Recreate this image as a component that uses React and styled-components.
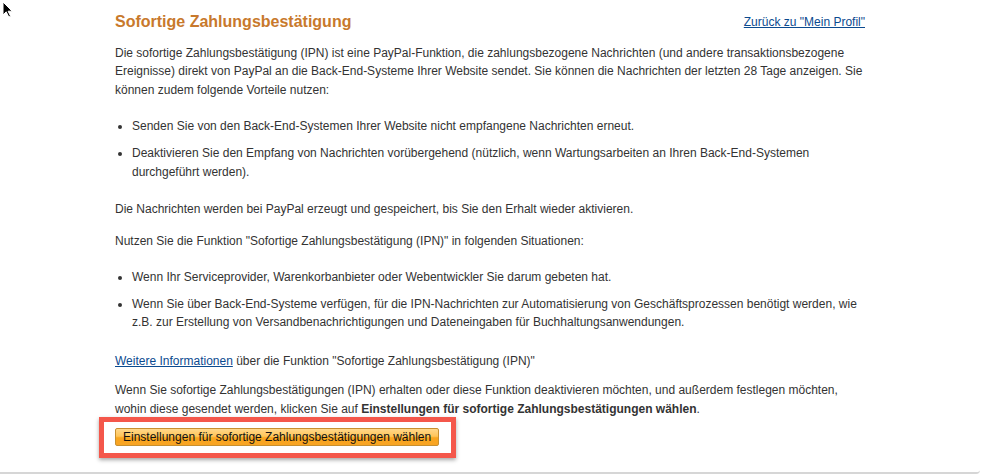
import styled, { createGlobalStyle } from 'styled-components';

const GlobalStyle = createGlobalStyle`
  html, body {
    margin: 0;
    padding: 0;
    background: #fff;
  }
  body {
    font-family: Arial, "Liberation Sans", Helvetica, sans-serif;
    color: #333;
  }
`;

const Page = styled.div`
  position: relative;
  box-sizing: border-box;
  width: 980px;
  height: 474px;
  border-bottom: 2px solid #d6d6d6;
  border-bottom-right-radius: 4px;
  padding: 11px 0 0 115px;
`;

const Cursor = styled.svg`
  position: absolute;
  left: 2px;
  top: 1px;
`;

const Content = styled.div`
  width: 750px;
  font-size: 12px;
  line-height: 18.5px;
`;

const Header = styled.div`
  display: flex;
  justify-content: space-between;
  align-items: center;
  margin-bottom: 10.5px;
`;

const Title = styled.h1`
  margin: 0;
  font-size: 16px;
  line-height: 22px;
  font-weight: bold;
  color: #c8792c;
`;

const Link = styled.a`
  color: #0b4a8f;
  text-decoration: underline;
  cursor: pointer;
`;

const Paragraph = styled.p`
  margin: 0 0 ${p => p.$gap || 0}px;
`;

const List = styled.ul`
  margin: 0 0 ${p => p.$gap || 0}px;
  padding-left: 17px;
  display: flex;
  flex-direction: column;
  gap: 8.5px;
`;

const Item = styled.li`
  padding-left: 0;
`;

const Highlight = styled.div`
  position: relative;
  display: inline-block;
  margin-top: 10px;
`;

const Outline = styled.span`
  position: absolute;
  top: -11px;
  left: -16px;
  right: -17px;
  bottom: -12px;
  border: 5px solid #f4574b;
  box-shadow: 0 2px 4px rgba(0, 0, 0, 0.35);
  pointer-events: none;
`;

const Button = styled.button`
  display: block;
  box-sizing: border-box;
  height: 18px;
  padding: 0 7px;
  border: 1px solid #c8902f;
  border-radius: 2px;
  background: linear-gradient(to bottom, #ffd88a 0%, #ffc65a 45%, #f9a61e 55%, #f8a424 100%);
  font-family: Arial, "Liberation Sans", Helvetica, sans-serif;
  font-size: 12px;
  line-height: 16px;
  color: #111;
  cursor: pointer;
`;

export default function App() {
  return (
    <>
      <GlobalStyle />
      <Page>
        <Cursor width="11" height="17" viewBox="0 0 11 17">
          <path d="M1 1 L1 14 L4.2 10.8 L6.8 16 L8.6 15.2 L6.1 10.2 L10.2 10.2 Z" fill="#000" stroke="#fff" strokeWidth="1" />
        </Cursor>
        <Content>
          <Header>
            <Title>Sofortige Zahlungsbestätigung</Title>
            <Link>Zurück zu "Mein Profil"</Link>
          </Header>
          <Paragraph $gap={18}>
            Die sofortige Zahlungsbestätigung (IPN) ist eine PayPal-Funktion, die zahlungsbezogene Nachrichten (und andere transaktionsbezogene Ereignisse) direkt von PayPal an die Back-End-Systeme Ihrer Website sendet. Sie können die Nachrichten der letzten 28 Tage anzeigen. Sie können zudem folgende Vorteile nutzen:
          </Paragraph>
          <List $gap={18.5}>
            <Item>Senden Sie von den Back-End-Systemen Ihrer Website nicht empfangene Nachrichten erneut.</Item>
            <Item>
              Deaktivieren Sie den Empfang von Nachrichten vorübergehend (nützlich, wenn Wartungsarbeiten an Ihren Back-End-Systemen durchgeführt werden).
            </Item>
          </List>
          <Paragraph $gap={13.5}>
            Die Nachrichten werden bei PayPal erzeugt und gespeichert, bis Sie den Erhalt wieder aktivieren.
          </Paragraph>
          <Paragraph $gap={17.5}>
            Nutzen Sie die Funktion "Sofortige Zahlungsbestätigung (IPN)" in folgenden Situationen:
          </Paragraph>
          <List $gap={20.5}>
            <Item>Wenn Ihr Serviceprovider, Warenkorbanbieter oder Webentwickler Sie darum gebeten hat.</Item>
            <Item>
              Wenn Sie über Back-End-Systeme verfügen, für die IPN-Nachrichten zur Automatisierung von Geschäftsprozessen benötigt werden, wie z.B. zur Erstellung von Versandbenachrichtigungen und Dateneingaben für Buchhaltungsanwendungen.
            </Item>
          </List>
          <Paragraph $gap={10.5}>
            <Link>Weitere Informationen</Link> über die Funktion "Sofortige Zahlungsbestätigung (IPN)"
          </Paragraph>
          <Paragraph>
            Wenn Sie sofortige Zahlungsbestätigungen (IPN) erhalten oder diese Funktion deaktivieren möchten, und außerdem festlegen möchten, wohin diese gesendet werden, klicken Sie auf <b>Einstellungen für sofortige Zahlungsbestätigungen wählen</b>.
          </Paragraph>
          <Highlight>
            <Button>Einstellungen für sofortige Zahlungsbestätigungen wählen</Button>
            <Outline />
          </Highlight>
        </Content>
      </Page>
    </>
  );
}
